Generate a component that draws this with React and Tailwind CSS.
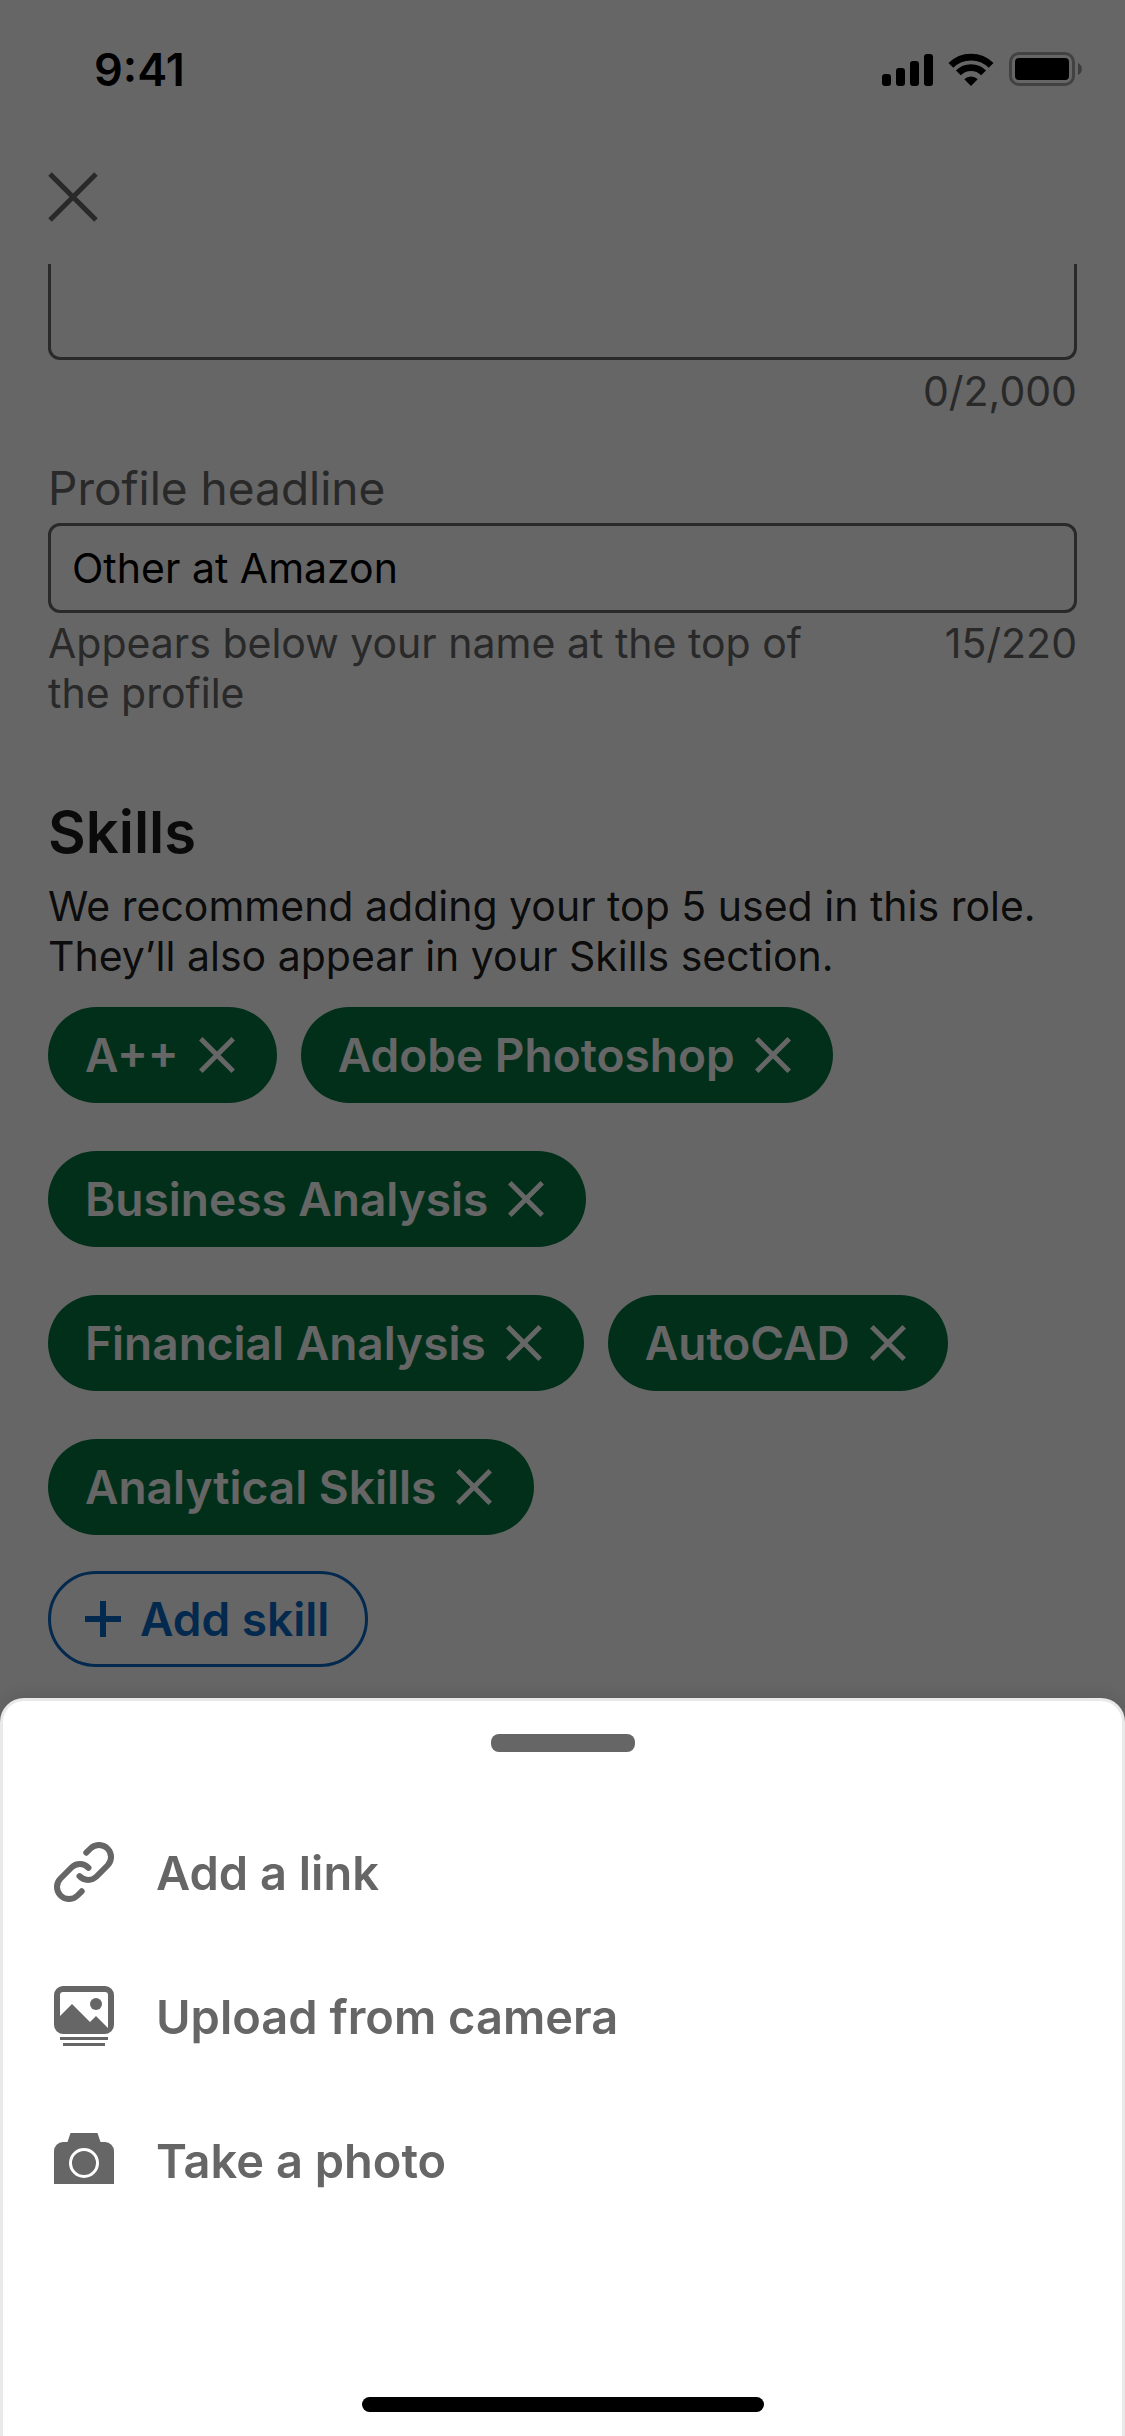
import React, { useState } from 'react'

const INITIAL_SKILLS = [
  'A++',
  'Adobe Photoshop',
  'Business Analysis',
  'Financial Analysis',
  'AutoCAD',
  'Analytical Skills',
]

/* ── Icons ─────────────────────────────────────────────────────── */

const SignalIcon = () => (
  <svg viewBox="0 0 51 33" className="w-[51px] h-[33px]" fill="currentColor" aria-hidden="true">
    <rect x="0" y="21" width="9" height="12" rx="3" />
    <rect x="14" y="15" width="9" height="18" rx="3" />
    <rect x="28" y="8" width="9" height="25" rx="3" />
    <rect x="42" y="1" width="9" height="32" rx="3" />
  </svg>
)

const WifiIcon = () => (
  <svg viewBox="0 0 46 33" className="w-[46px] h-[33px]" aria-hidden="true">
    <g fill="none" stroke="currentColor" strokeWidth="6.8">
      <path d="M2.9 12.4A28.5 28.5 0 0 1 43.1 12.4" />
      <path d="M10.4 19.9A17.8 17.8 0 0 1 35.6 19.9" />
    </g>
    <path d="M23 33L16.3 26.2A9.5 9.5 0 0 1 29.7 26.2Z" fill="currentColor" />
  </svg>
)

const BatteryIcon = () => (
  <svg viewBox="0 0 74 34" className="w-[74px] h-[34px]" aria-hidden="true">
    <rect x="1.5" y="1.5" width="63" height="31" rx="8.5" fill="none" stroke="currentColor" strokeOpacity="0.35" strokeWidth="3" />
    <path d="M69 11a6.6 6.6 0 0 1 0 12Z" fill="currentColor" fillOpacity="0.4" />
    <rect x="6" y="6" width="54" height="22" rx="4" fill="currentColor" />
  </svg>
)

const CloseIcon = () => (
  <svg viewBox="0 0 50 50" className="w-[50px] h-[50px]" aria-hidden="true">
    <path d="M2 2L48 48M48 2L2 48" fill="none" stroke="currentColor" strokeWidth="5" />
  </svg>
)

const RemoveIcon = () => (
  <svg viewBox="0 0 36 36" className="w-9 h-9 shrink-0" aria-hidden="true">
    <path d="M1.8 1.8L34.2 34.2M34.2 1.8L1.8 34.2" fill="none" stroke="currentColor" strokeWidth="5" />
  </svg>
)

const PlusIcon = () => (
  <svg viewBox="0 0 36 36" className="w-9 h-9 shrink-0" aria-hidden="true">
    <path d="M18 0V36M0 18H36" fill="none" stroke="currentColor" strokeWidth="6" />
  </svg>
)

const LinkIcon = () => (
  <svg viewBox="0 0 60 60" className="w-[60px] h-[60px] shrink-0" aria-hidden="true">
    <g fill="none" stroke="currentColor" strokeWidth="6" strokeLinecap="round">
      <path d="M32.3 10.7L36.5 6.5A12 12 0 0 1 53.5 23.5L42.5 34.5A12 12 0 0 1 25.5 34.2" />
      <path d="M27.7 49.3L23.5 53.5A12 12 0 0 1 6.5 36.5L17.5 25.5A12 12 0 0 1 34.5 25.8" />
    </g>
  </svg>
)

const GalleryIcon = () => (
  <svg viewBox="0 0 60 60" className="w-[60px] h-[60px] shrink-0" fill="currentColor" aria-hidden="true">
    <path
      fillRule="evenodd"
      d="M9 0H51A9 9 0 0 1 60 9V39A9 9 0 0 1 51 48H9A9 9 0 0 1 0 39V9A9 9 0 0 1 9 0ZM6 9V30L18 18L36 36L42 30L54 42V9A3 3 0 0 0 51 6H9A3 3 0 0 0 6 9Z"
    />
    <circle cx="42" cy="18" r="6" />
    <rect x="6" y="51" width="48" height="3" />
    <rect x="9" y="57" width="42" height="3" />
  </svg>
)

const CameraIcon = () => (
  <svg viewBox="0 0 60 60" className="w-[60px] h-[60px] shrink-0" aria-hidden="true">
    <path d="M0 54V21A9 9 0 0 1 9 12H13.5L16.5 3H43.5L46.5 12H51A9 9 0 0 1 60 21V54Z" fill="currentColor" />
    <circle cx="30" cy="33" r="13.5" fill="none" stroke="#fff" strokeWidth="3" />
  </svg>
)

/* ── Sections ──────────────────────────────────────────────────── */

const StatusBar = () => (
  <div className="flex items-center justify-between h-[138px] pl-[94px] pr-[42px] text-black">
    <span className="text-[45px] leading-none font-semibold">9:41</span>
    <div className="flex items-center gap-[15px]">
      <SignalIcon />
      <WifiIcon />
      <BatteryIcon />
    </div>
  </div>
)

const SkillPill = ({ name, onRemove }) => (
  <button
    type="button"
    aria-label={`Remove ${name}`}
    onClick={onRemove}
    className="flex items-center gap-5 h-24 pl-[37px] pr-[42px] rounded-full bg-[#057642] text-white text-[46px] leading-none font-semibold"
  >
    {name}
    <RemoveIcon />
  </button>
)

const SheetAction = ({ icon, label }) => (
  <li>
    <button type="button" className="flex items-center gap-[42px] w-full h-36 px-[51px] text-left">
      {icon}
      <span className="text-[47px] leading-none font-semibold">{label}</span>
    </button>
  </li>
)

const App = () => {
  const [headline, setHeadline] = useState('Other at Amazon')
  const [description, setDescription] = useState('')
  const [skills, setSkills] = useState(INITIAL_SKILLS)

  const removeSkill = (name) => {
    setSkills(skills.filter(s => s !== name))
  }

  return (
    <div className="relative min-h-screen bg-white font-['Inter',sans-serif]">
      <StatusBar />

      <header className="h-[126px] px-12 pt-[34px] text-[#666]">
        <button type="button" aria-label="Close" className="block">
          <CloseIcon />
        </button>
      </header>

      <main className="px-12 pb-12 text-[41px] leading-[50px] text-black/90">
        {/* Description, scrolled under the header */}
        <textarea
          aria-label="Description"
          value={description}
          onChange={e => setDescription(e.target.value)}
          className="block w-full h-24 px-6 border-[3px] border-t-0 border-[#666] rounded-b-xl resize-none"
        />
        <p className="mt-1.5 text-right text-[#666]">{description.length}/2,000</p>

        {/* Headline */}
        <label htmlFor="headline" className="block mt-[42px] text-[46px] leading-[60px] text-[#666]">
          Profile headline
        </label>
        <input
          id="headline"
          type="text"
          value={headline}
          onChange={e => setHeadline(e.target.value)}
          className="block w-full h-[90px] mt-[5px] px-[21px] border-[3px] border-[#666] rounded-xl text-black"
        />
        <div className="flex justify-between gap-24 mt-[5px] text-[#666]">
          <p className="max-w-[800px]">Appears below your name at the top of the profile</p>
          <span>{headline.length}/220</span>
        </div>

        {/* Skills */}
        <h2 className="mt-[78px] text-[58px] leading-[72px] font-semibold">Skills</h2>
        <p className="mt-[13px]">
          We recommend adding your top 5 used in this role. They’ll also appear in your Skills section.
        </p>
        <div className="flex flex-wrap gap-x-6 gap-y-12 mt-[26px]">
          {skills.map(name => (
            <SkillPill key={name} name={name} onRemove={() => removeSkill(name)} />
          ))}
        </div>
        <button
          type="button"
          className="flex items-center gap-[19px] h-24 mt-9 pl-[34px] pr-9 border-[3px] border-[#0a66c2] rounded-full text-[#0a66c2] text-[46px] leading-none font-semibold"
        >
          <PlusIcon />
          Add skill
        </button>
      </main>

      {/* Dimmed backdrop with the bottom sheet */}
      <div className="fixed inset-0 flex flex-col justify-end bg-black/60">
        <section
          role="dialog"
          aria-label="Add media"
          className="border-[3px] border-b-0 border-[#e9e9e9] rounded-t-3xl bg-white text-[#666] shadow-[0_0_24px_rgba(0,0,0,0.15)]"
        >
          <div className="w-36 h-[18px] mx-auto mt-[33px] rounded-lg bg-[#666]" />
          <ul className="mt-12">
            <SheetAction icon={<LinkIcon />} label="Add a link" />
            <SheetAction icon={<GalleryIcon />} label="Upload from camera" />
            <SheetAction icon={<CameraIcon />} label="Take a photo" />
          </ul>
          <div className="w-[402px] h-[15px] mx-auto mt-[165px] mb-6 rounded-full bg-black" />
        </section>
      </div>
    </div>
  )
}

export default App
